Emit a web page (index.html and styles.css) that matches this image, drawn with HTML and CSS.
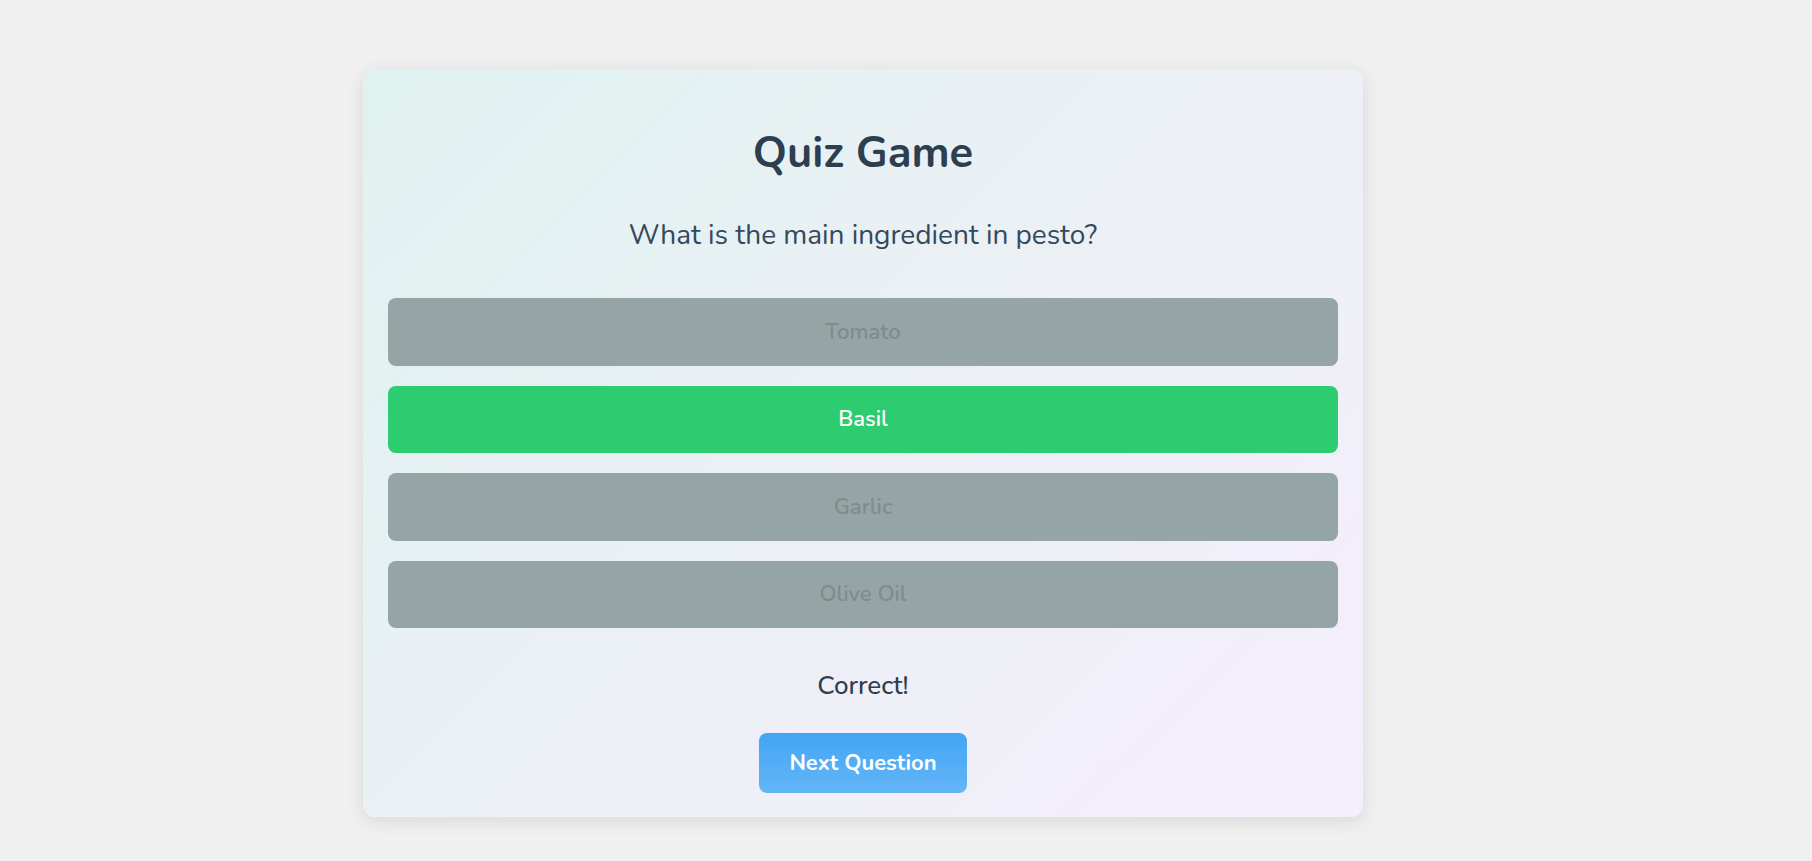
FILE: index.html
```html
<!DOCTYPE html>
<html lang="en">
<head>
<meta charset="utf-8">
<title>Quiz Game</title>
<link rel="stylesheet" href="styles.css">
</head>
<body>
  <main class="quiz-card">
    <h1 class="quiz-title">Quiz Game</h1>
    <p class="quiz-question">What is the main ingredient in pesto?</p>
    <div class="answers">
      <button class="answer answer-disabled">Tomato</button>
      <button class="answer answer-correct">Basil</button>
      <button class="answer answer-disabled">Garlic</button>
      <button class="answer answer-disabled">Olive Oil</button>
    </div>
    <p class="feedback">Correct!</p>
    <button class="next-btn">Next Question</button>
  </main>
</body>
</html>
```

FILE: styles.css
```css
html, body {
  margin: 0;
  padding: 0;
}

body {
  background: #f0f0f0;
  font-family: "Nunito", "Lato", "Noto Sans", sans-serif;
  color: #2c3e50;
  min-height: 861px;
}

.quiz-card {
  box-sizing: border-box;
  width: 1000px;
  height: 748px;
  margin: 69px 0 0 363px;
  padding: 57.5px 25px 0 25px;
  border-radius: 12px;
  background: linear-gradient(135deg, #dff2f0 0%, #ecf0f5 50%, #f5eefc 100%);
  box-shadow: 0 4px 18px rgba(0, 0, 0, 0.1);
  display: flex;
  flex-direction: column;
  align-items: center;
}

.quiz-title {
  margin: 0;
  font-size: 43.5px;
  line-height: 52px;
  font-weight: 700;
  color: #2c3e50;
}

.quiz-question {
  margin: 38.5px 0 0 0;
  font-size: 28px;
  line-height: 36px;
  font-weight: 400;
  color: #34495e;
}

.answers {
  margin-top: 45px;
  width: 100%;
  display: flex;
  flex-direction: column;
  gap: 20px;
}

.answer {
  height: 67.5px;
  width: 100%;
  border: none;
  border-radius: 8px;
  font-family: inherit;
  font-size: 22px;
  font-weight: 600;
  padding: 0;
}

.answer-disabled {
  background: #95a5a6;
  color: #7f8c8d;
}

.answer-correct {
  background: #2ecc71;
  color: #ffffff;
}

.feedback {
  margin: 41.5px 0 0 0;
  font-size: 26px;
  line-height: 32px;
  font-weight: 500;
  color: #2c3e50;
}

.next-btn {
  margin-top: 31.5px;
  height: 60px;
  padding: 0 30px;
  border: none;
  border-radius: 8px;
  background: linear-gradient(180deg, #42a5f5 0%, #64b5f6 100%);
  color: #ffffff;
  font-family: inherit;
  font-size: 22px;
  font-weight: 700;
}
```
